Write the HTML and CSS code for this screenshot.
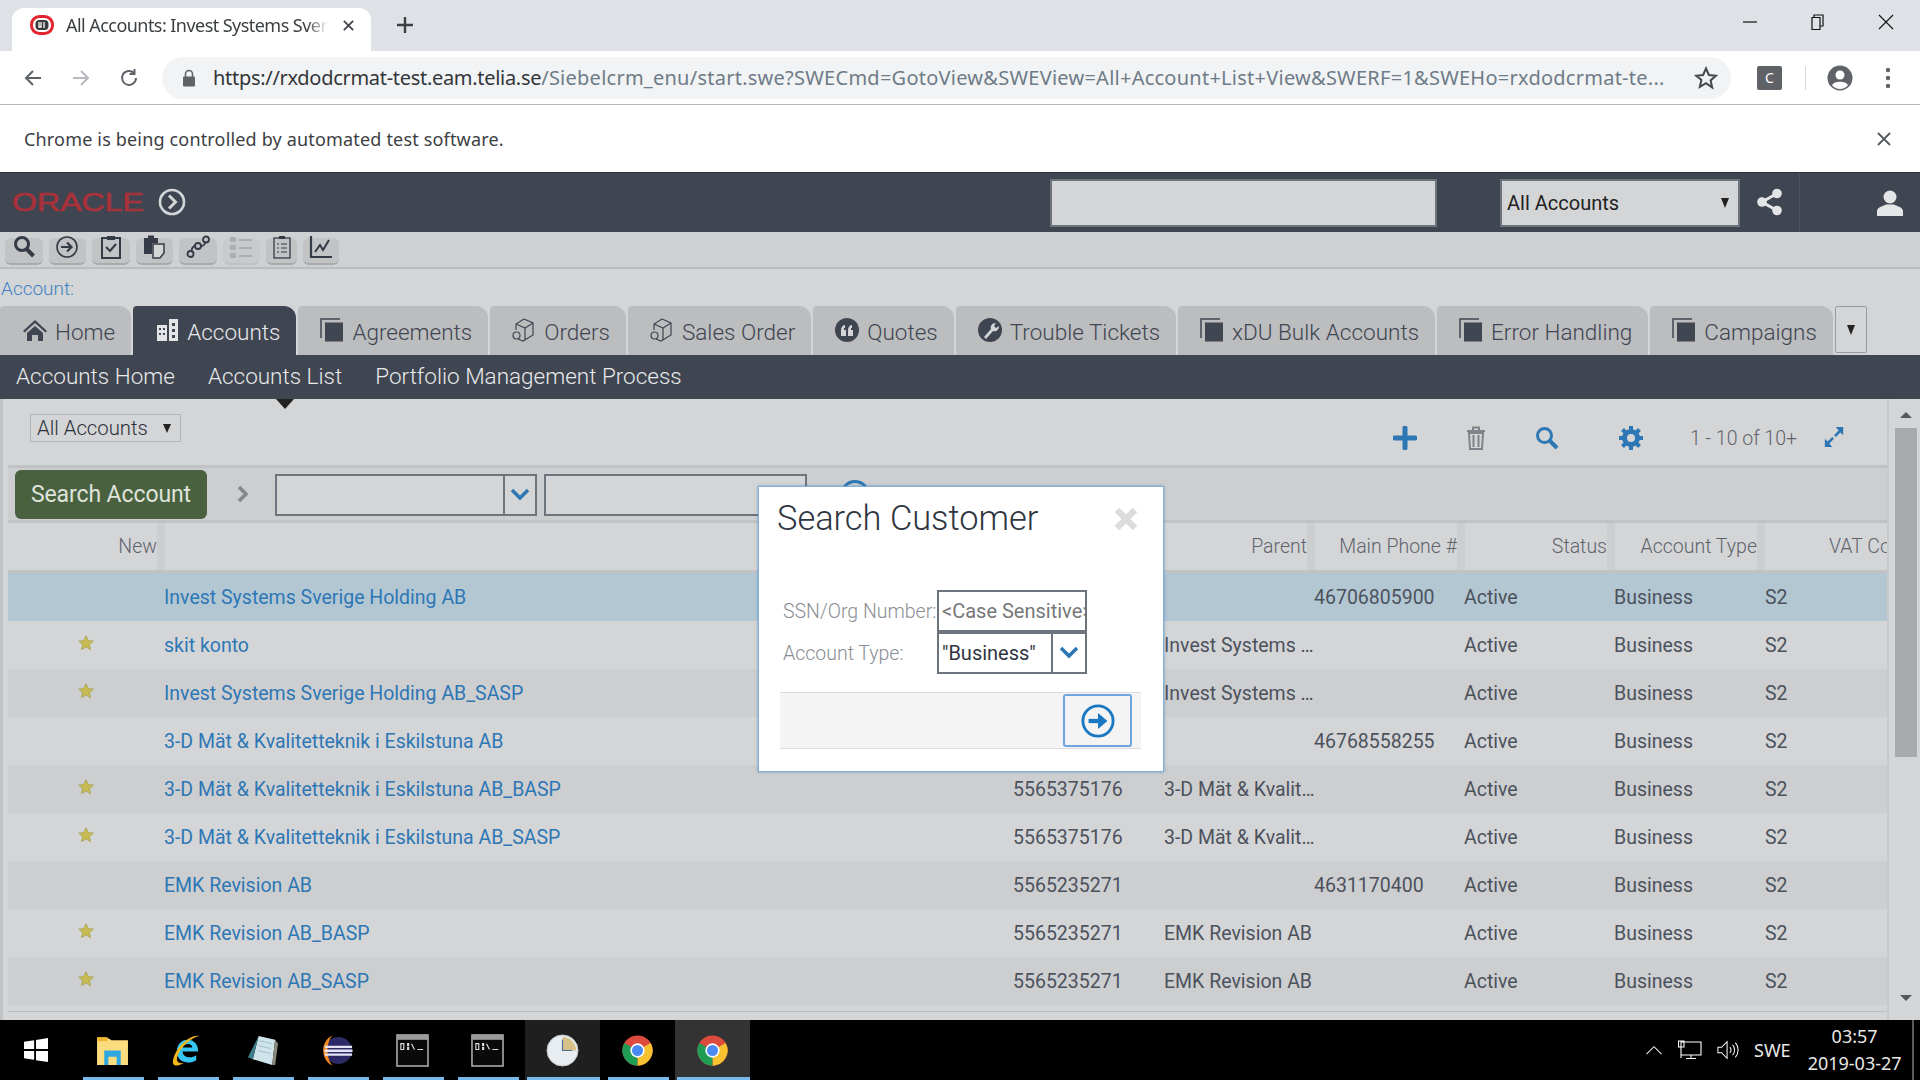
FILE: index.html
```html
<!DOCTYPE html>
<html lang="en">
<head>
<meta charset="utf-8">
<title>All Accounts: Invest Systems Sverige Holding AB</title>
<link rel="stylesheet" href="styles.css">
</head>
<body>
<svg class="defs" width="0" height="0">
  <symbol id="doc" viewBox="0 0 24 24"><path d="M1 20V1h19" fill="none" stroke="#3f4551" stroke-width="1.5"/><rect x="5" y="4.5" width="18" height="19" fill="#3f4551"/></symbol>
  <symbol id="box" viewBox="0 0 24 24"><path d="M12 1l9 4v12l-10 6-5-2M12 1L4 6v6M4 6l9 4 8-5M13 10v12" fill="none" stroke="#3f4551" stroke-width="1.2"/><circle cx="4.500" cy="17.500" r="3.500" fill="none" stroke="#3f4551" stroke-width="1.200"/></symbol>
  <symbol id="star" viewBox="0 0 24 24"><path d="M12 1l3.300 7.300 7.700.8-5.800 5.200 1.700 7.700L12 18l-6.900 4 1.700-7.700L1 9.100l7.700-.8z" fill="#c8bb56" stroke="#a59a4a" stroke-width="1"/></symbol>
  <symbol id="chev" viewBox="0 0 20 14"><path d="M2 2l8 8 8-8" fill="none" stroke="#2e77b5" stroke-width="3.500"/></symbol>
  <symbol id="circarrow" viewBox="0 0 36 36"><circle cx="18" cy="18" r="16" fill="none" stroke="currentColor" stroke-width="3"/><path d="M8 18h16" fill="none" stroke="currentColor" stroke-width="4.500"/><path d="M18 9.500l10 8.500-10 8.500z" fill="currentColor"/></symbol>
  <symbol id="chrome" viewBox="0 0 24 24"><circle cx="12" cy="12" r="11" fill="#dd4b3e"/><path d="M12 12L21.530 6.500A11 11 0 0 1 12 23Z" fill="#f6c230"/><path d="M12 12L12 23A11 11 0 0 1 2.470 6.500Z" fill="#1f9d55"/><circle cx="12" cy="12" r="5.200" fill="#fff"/><circle cx="12" cy="12" r="4" fill="#4a8af4"/></symbol>
  <symbol id="cmd" viewBox="0 0 34 34"><rect x="1" y="1" width="32" height="32" fill="#0a0a0a" stroke="#b9b9b9" stroke-width="1.500"/><rect x="1" y="1" width="32" height="5" fill="#9a9a9a"/><path d="M5 10h3v6H5zM12 10h1v2h-1zM12 14h1v2h-1zM16 10l3 6M22 16h6" fill="none" stroke="#ddd" stroke-width="1.200"/></symbol>
</svg>

<div class="page">
  <header class="tabstrip">
    <div class="btab">
      <svg class="fav" viewBox="0 0 24 20"><rect x="1.500" y="1.500" width="21" height="17" rx="8" fill="#fff" stroke="#e3262e" stroke-width="3"/><rect x="5.500" y="5" width="13" height="10" rx="4" fill="#3a3a3a"/><path d="M9 7v5h2V7M14 7v6" stroke="#fff" stroke-width="1.300" fill="none"/></svg>
      <span class="btab-title">All Accounts: Invest Systems Sverige Holding AB</span>
      <svg class="btab-x" viewBox="0 0 14 14"><path d="M2 2l10 10M12 2L2 12" stroke="#45484c" stroke-width="2"/></svg>
    </div>
    <svg class="newtab" viewBox="0 0 20 20"><path d="M10 2v16M2 10h16" stroke="#3c4043" stroke-width="2.400"/></svg>
    <div class="winctl">
      <svg viewBox="0 0 16 16"><path d="M1 8h14" stroke="#111" stroke-width="1.200"/></svg>
      <svg viewBox="0 0 16 16"><path d="M4 3V1h9v11h-3M2 3.500h8v12H2z" fill="none" stroke="#111" stroke-width="1.200"/></svg>
      <svg viewBox="0 0 16 16"><path d="M1 1l14 14M15 1L1 15" stroke="#111" stroke-width="1.100"/></svg>
    </div>
  </header>

  <nav class="toolbar">
    <svg class="nav" viewBox="0 0 20 20"><path d="M18 10H3M10 3l-7 7 7 7" fill="none" stroke="#5f6368" stroke-width="2"/></svg>
    <svg class="nav" viewBox="0 0 20 20"><path d="M2 10h15M10 3l7 7-7 7" fill="none" stroke="#b7b9bc" stroke-width="2"/></svg>
    <svg class="nav" viewBox="0 0 20 20"><path d="M17 10a7 7 0 1 1-2-5M15.500 1v5h-5" fill="none" stroke="#5f6368" stroke-width="2"/></svg>
    <div class="omnibox">
      <svg class="lock" viewBox="0 0 14 18"><path d="M3.500 8V5a3.500 3.500 0 0 1 7 0v3" fill="none" stroke="#5f6368" stroke-width="1.600"/><rect x="1" y="7.500" width="12" height="10" rx="1" fill="#5f6368"/></svg>
      <span class="url"><span class="url-host">https://rxdodcrmat-test.eam.telia.se</span>/Siebelcrm_enu/start.swe?SWECmd=GotoView&amp;SWEView=All+Account+List+View&amp;SWERF=1&amp;SWEHo=rxdodcrmat-te...</span>
      <svg class="bstar" viewBox="0 0 24 24"><path d="M12 2.500l2.900 6.500 7 .7-5.300 4.700 1.600 7L12 17.200l-6.200 3.700 1.600-7L2.100 9.700l7-.7z" fill="none" stroke="#45484c" stroke-width="2"/></svg>
    </div>
    <span class="ext">C</span>
    <span class="tdiv"></span>
    <svg class="person" viewBox="0 0 26 26"><circle cx="13" cy="13" r="12.500" fill="#5f6368"/><circle cx="13" cy="10" r="4.500" fill="#fff"/><path d="M5 20c2-4.500 14-4.500 16 0a10 10 0 0 1-16 0z" fill="#fff"/></svg>
    <svg class="dots" viewBox="0 0 6 24"><circle cx="3" cy="4" r="2.200" fill="#5f6368"/><circle cx="3" cy="12" r="2.200" fill="#5f6368"/><circle cx="3" cy="20" r="2.200" fill="#5f6368"/></svg>
  </nav>

  <div class="infobar">
    <span>Chrome is being controlled by automated test software.</span>
    <svg class="info-x" viewBox="0 0 14 14"><path d="M1 1l12 12M13 1L1 13" stroke="#55585c" stroke-width="1.800"/></svg>
  </div>

  <div class="apphead">
    <svg class="oracle" viewBox="0 0 134 24"><text x="0" y="21" textLength="132" lengthAdjust="spacingAndGlyphs">ORACLE</text></svg>
    <svg class="hcirc" viewBox="0 0 28 28"><circle cx="14" cy="14" r="12" fill="none" stroke="#d4d5d7" stroke-width="2.600"/><path d="M11 7.500l6.500 6.500-6.500 6.500" fill="none" stroke="#d4d5d7" stroke-width="3"/></svg>
    <div class="hsearch"></div>
    <div class="hselect"><span>All Accounts</span><i class="tri"></i></div>
    <svg class="share" viewBox="0 0 28 28"><circle cx="21" cy="5.500" r="4.800" fill="#e4e5e7"/><circle cx="6" cy="14" r="4.800" fill="#e4e5e7"/><circle cx="21" cy="22.500" r="4.800" fill="#e4e5e7"/><path d="M21 5.500L6 14l15 8.500" fill="none" stroke="#e4e5e7" stroke-width="3"/></svg>
    <div class="huser">
      <svg viewBox="0 0 28 28"><circle cx="14" cy="8" r="6.500" fill="#e4e5e7"/><path d="M1 27v-5c0-4 7-5 9-6.500h8c2 1.500 9 2.500 9 6.500v5z" fill="#e4e5e7"/></svg>
    </div>
  </div>

  <div class="iconbar">
    <span class="ib ib-w37"><svg viewBox="0 0 24 24"><circle cx="10" cy="9" r="6.500" fill="none" stroke="#343a46" stroke-width="3"/><path d="M14.500 14l7 7" stroke="#343a46" stroke-width="4"/></svg></span>
    <span class="ib ib-w37"><svg viewBox="0 0 24 24"><circle cx="12" cy="12" r="10" fill="none" stroke="#343a46" stroke-width="1.600"/><path d="M6 12h10M12 7.500l4.500 4.500-4.500 4.500" fill="none" stroke="#343a46" stroke-width="2.200"/></svg></span>
    <span class="ib ib-w37"><svg viewBox="0 0 24 24"><path d="M8 3H3v20h18V3h-5" fill="none" stroke="#343a46" stroke-width="2"/><rect x="8" y="1" width="8" height="4" fill="#343a46"/><path d="M7 12l4 4 6-7" fill="none" stroke="#343a46" stroke-width="2"/></svg></span>
    <span class="ib ib-w37"><svg viewBox="0 0 24 24"><path d="M2 3h14v5H10v11H2z" fill="#343a46"/><rect x="6" y="0.500" width="6" height="4" fill="#343a46"/><path d="M11 9h11v9l-4 5h-7z" fill="#d4d5d7" stroke="#343a46" stroke-width="1.500"/></svg></span>
    <span class="ib ib-w37"><svg viewBox="0 0 24 24"><g fill="none" stroke="#343a46" stroke-width="1.800"><circle cx="4.500" cy="19" r="3"/><circle cx="12" cy="11" r="3"/><circle cx="20" cy="4.500" r="3"/><path d="M5.500 16c0-3 2-5 3.500-5M15 11c2.500 0 4-2 4-3.500"/></g></svg></span>
    <span class="ib ib-w37 ib-off"><svg viewBox="0 0 24 24"><path d="M1 2h6v5H1zM1 10h6v5H1zM1 18h6v5H1zM10 4h13v2H10zM10 12h13v2H10zM10 20h13v2H10z" fill="#adaeb1"/></svg></span>
    <span class="ib ib-w31"><svg viewBox="0 0 24 24"><rect x="4" y="3" width="16" height="20" fill="none" stroke="#343a46" stroke-width="1.300"/><rect x="9" y="1" width="6" height="3" fill="#343a46"/><path d="M7 9h2M11 9h6M7 13h2M11 13h6M7 17h2M11 17h6" stroke="#343a46" stroke-width="1.100"/></svg></span>
    <span class="ib ib-w36"><svg viewBox="0 0 24 24"><path d="M2 1v21h21" fill="none" stroke="#343a46" stroke-width="2.200"/><path d="M6 17l5-7 3 5 6-10" fill="none" stroke="#343a46" stroke-width="2"/></svg></span>
  </div>

  <div class="acctrow">Account:</div>

  <div class="tabs">
    <a class="tab tab-first"><svg viewBox="0 0 24 24"><path d="M12 2L0 13l1.500 1.500L12 5l10.500 9.500L24 13zM4 15l8-7 8 7v8h-5v-6H9v6H4z" fill="#3f4551"/></svg>Home</a>
    <a class="tab tab-on"><svg viewBox="0 0 24 24"><path d="M2 7h10v16H2zM14 1h9v22h-9z" fill="#e4e5e7"/><path d="M4 10h2v2H4zM8 10h2v2H8zM4 15h2v2H4zM8 15h2v2H8zM17 5h3v3h-3zM17 11h3v3h-3zM17 17h3v3h-3z" fill="#3f4551"/></svg>Accounts</a>
    <a class="tab"><svg><use href="#doc"/></svg>Agreements</a>
    <a class="tab"><svg><use href="#box"/></svg>Orders</a>
    <a class="tab"><svg><use href="#box"/></svg>Sales Order</a>
    <a class="tab"><svg viewBox="0 0 24 24"><circle cx="12" cy="12" r="12" fill="#3f4551"/><path d="M6 18v-6c0-3 2-5 4-5v3H9v2h2v6zM13 18v-6c0-3 2-5 4-5v3h-1v2h2v6z" fill="#d4d5d7"/></svg>Quotes</a>
    <a class="tab"><svg viewBox="0 0 24 24"><circle cx="12" cy="12" r="12" fill="#3f4551"/><path d="M6 19l7-8c-1-3 1-6 5-6l-2 3 2 2 3-2c0 4-3 6-6 5l-7 8z" fill="#d4d5d7"/></svg>Trouble Tickets</a>
    <a class="tab"><svg><use href="#doc"/></svg>xDU Bulk Accounts</a>
    <a class="tab"><svg><use href="#doc"/></svg>Error Handling</a>
    <a class="tab"><svg><use href="#doc"/></svg>Campaigns</a>
    <span class="tabmore"><i class="tri"></i></span>
  </div>

  <div class="subnav">
    <a>Accounts Home</a>
    <a>Accounts List</a>
    <a>Portfolio Management Process</a>
    <i class="caret"></i>
  </div>

  <main class="content">
    <div class="list">
      <div class="listbar">
        <div class="viewsel"><span>All Accounts</span><i class="tri"></i></div>
        <div class="listtools">
          <svg class="lt lt-plus" viewBox="0 0 24 24"><path d="M12 2v20M2 12h20" stroke="#2e77b5" stroke-width="5" stroke-linecap="round"/></svg>
          <svg class="lt lt-trash" viewBox="0 0 20 24"><path d="M1 5h18M7 4V1.500h6V4" fill="none" stroke="#80848a" stroke-width="2"/><path d="M3 7h14l-1 16H4zM7.500 9v12M12.500 9v12" fill="none" stroke="#80848a" stroke-width="2"/></svg>
          <svg class="lt lt-search" viewBox="0 0 24 24"><circle cx="9.500" cy="9.500" r="7" fill="none" stroke="#2e77b5" stroke-width="3"/><path d="M14.500 14.500l7.500 7.500" stroke="#2e77b5" stroke-width="4"/></svg>
          <svg class="lt lt-gear" viewBox="0 0 24 24"><circle cx="12" cy="12" r="6.500" fill="none" stroke="#2e77b5" stroke-width="5"/><path d="M12 0v5M12 19v5M0 12h5M19 12h5M3.500 3.500l3.500 3.500M17 17l3.500 3.500M20.500 3.500L17 7M7 17l-3.500 3.500" stroke="#2e77b5" stroke-width="4"/></svg>
          <span class="count">1 - 10 of 10+</span>
          <svg class="lt lt-exp" viewBox="0 0 22 24"><path d="M13 1h8v9l-3-3-5 5-2-2 5-5zM9 23H1v-9l3 3 5-5 2 2-5 5z" fill="#2e77b5"/></svg>
        </div>
      </div>

      <div class="searchbar">
        <button class="greenbtn">Search Account</button>
        <svg class="sb-chev" viewBox="0 0 12 18"><path d="M2 2l7 7-7 7" fill="none" stroke="#85878b" stroke-width="3.500"/></svg>
        <div class="sb-select"><span></span><b><svg><use href="#chev"/></svg></b></div>
        <div class="sb-input"></div>
        <i class="sb-go"></i>
      </div>

      <div class="grid ghead">
        <span class="hc">New</span>
        <span class="hc"></span>
        <span class="hc hc-none"></span>
        <span class="hc">Parent</span>
        <span class="hc">Main Phone #</span>
        <span class="hc">Status</span>
        <span class="hc">Account Type</span>
        <span class="hc hc-clip">VAT Code</span>
      </div>

      <div class="grid row row-sel"><span></span><a>Invest Systems Sverige Holding AB</a><span></span><span></span><span>46706805900</span><span>Active</span><span>Business</span><span>S2</span></div>
      <div class="grid row"><span class="st"><svg><use href="#star"/></svg></span><a>skit konto</a><span></span><span>Invest Systems …</span><span></span><span>Active</span><span>Business</span><span>S2</span></div>
      <div class="grid row row-alt"><span class="st"><svg><use href="#star"/></svg></span><a>Invest Systems Sverige Holding AB_SASP</a><span></span><span>Invest Systems …</span><span></span><span>Active</span><span>Business</span><span>S2</span></div>
      <div class="grid row"><span></span><a>3-D Mät &amp; Kvalitetteknik i Eskilstuna AB</a><span></span><span></span><span>46768558255</span><span>Active</span><span>Business</span><span>S2</span></div>
      <div class="grid row row-alt"><span class="st"><svg><use href="#star"/></svg></span><a>3-D Mät &amp; Kvalitetteknik i Eskilstuna AB_BASP</a><span>5565375176</span><span>3-D Mät &amp; Kvalit…</span><span></span><span>Active</span><span>Business</span><span>S2</span></div>
      <div class="grid row"><span class="st"><svg><use href="#star"/></svg></span><a>3-D Mät &amp; Kvalitetteknik i Eskilstuna AB_SASP</a><span>5565375176</span><span>3-D Mät &amp; Kvalit…</span><span></span><span>Active</span><span>Business</span><span>S2</span></div>
      <div class="grid row row-alt"><span></span><a>EMK Revision AB</a><span>5565235271</span><span></span><span>4631170400</span><span>Active</span><span>Business</span><span>S2</span></div>
      <div class="grid row"><span class="st"><svg><use href="#star"/></svg></span><a>EMK Revision AB_BASP</a><span>5565235271</span><span>EMK Revision AB</span><span></span><span>Active</span><span>Business</span><span>S2</span></div>
      <div class="grid row row-alt"><span class="st"><svg><use href="#star"/></svg></span><a>EMK Revision AB_SASP</a><span>5565235271</span><span>EMK Revision AB</span><span></span><span>Active</span><span>Business</span><span>S2</span></div>
      <div class="listfoot"></div>
    </div>
    <aside class="scroll">
      <i class="sc-up"></i>
      <div class="sc-thumb"></div>
      <i class="sc-down"></i>
    </aside>
  </main>

  <footer class="taskbar">
    <span class="tb tb-start"><svg viewBox="0 0 26 26"><path d="M0 4l11-1.500V12H0zM13 2.200L26 0v12H13zM0 14h11v9.500L0 22zM13 14h13v12l-13-2z" fill="#fff"/></svg></span>
    <span class="tb"><svg viewBox="0 0 32 32"><path d="M1 4h11l3 2h16v24H1z" fill="#fbdc7e"/><path d="M1 3h10v4H1z" fill="#f0b731"/><path d="M8 16h16v14h-4v-8h-8v8H8z" fill="#2fa7e0"/></svg></span>
    <span class="tb"><svg viewBox="0 0 34 34"><path d="M17 6c7 0 11 5 11 12H12c0 6 8 8 14 4v5c-8 5-20 2-20-9C6 11 11 6 17 6zM12 14h10c0-5-9-5-10 0z" fill="#37c6f4"/><path d="M29 2C20 0 4 14 2 28c-1 5 5 6 11 2C6 31 5 27 7 22 10 13 22 3 29 2z" fill="#f3b918"/></svg></span>
    <span class="tb"><svg viewBox="0 0 34 34"><path d="M13 2l17 4-3 26-20-6z" fill="#cfe3ea"/><path d="M13 2L2 24l5 2z" fill="#3d7f8c"/><path d="M30 6l3 4-3 22-3 0z" fill="#8b8b7d"/><path d="M14 7l13 3M13 12l13 3M12 17l13 3" stroke="#9fc1cc" stroke-width="1"/></svg></span>
    <span class="tb"><svg viewBox="0 0 34 34"><circle cx="18" cy="17" r="14" fill="#2e2a68"/><path d="M12 1.500C-1 7-1 27 12 32.500 5 26 5 8 12 1.500z" fill="#f58a1f"/><path d="M4 12h28v2.500H4zM3.500 16h29v2.500h-29zM4 20h28v2.500H4z" fill="#e6e3f2"/></svg></span>
    <span class="tb"><svg><use href="#cmd"/></svg></span>
    <span class="tb"><svg><use href="#cmd"/></svg></span>
    <span class="tb tb-open"><svg viewBox="0 0 34 34"><circle cx="17" cy="17" r="16" fill="#e7edf1" stroke="#bfbfbf"/><path d="M17 3a14 14 0 0 1 14 14H17z" fill="#d8c187"/><path d="M17 6v11h10" fill="none" stroke="#4a6e95" stroke-width="1.200"/></svg></span>
    <span class="tb"><svg><use href="#chrome"/></svg></span>
    <span class="tb tb-active"><svg><use href="#chrome"/></svg></span>
    <div class="tray">
      <svg class="tr-up" viewBox="0 0 20 12"><path d="M1 11l9-9 9 9" fill="none" stroke="#e6e6e6" stroke-width="1.300"/></svg>
      <svg class="tr-net" viewBox="0 0 24 20"><path d="M3 2h20v13H3zM3 15v3M13 15v3M8 18.500h10M0.500 1h5.500v6H0.500z" fill="#000" stroke="#fff" stroke-width="1.100"/></svg>
      <svg class="tr-vol" viewBox="0 0 24 20"><path d="M1 7h4l6-6v18l-6-6H1z" fill="none" stroke="#fff" stroke-width="1.100"/><path d="M14 7a4 4 0 0 1 0 6M17 4.500a8 8 0 0 1 0 11M20 2a12 12 0 0 1 0 16" fill="none" stroke="#fff" stroke-width="1.100"/></svg>
      <span class="tr-lang">SWE</span>
      <div class="clock"><span>03:57</span><span>2019-03-27</span></div>
      <i class="tr-edge"></i>
    </div>
  </footer>

  <section class="dialog">
    <div class="dlg-head">
      <h1>Search Customer</h1>
      <svg class="dlg-x" viewBox="0 0 24 22"><path d="M3 2l18 18M21 2L3 20" stroke="#dcdcdc" stroke-width="6.500"/></svg>
    </div>
    <div class="dlg-form">
      <label>SSN/Org Number:</label>
      <div class="dlg-input">&lt;Case Sensitive&gt;</div>
      <label>Account Type:</label>
      <div class="dlg-select"><span>"Business"</span><b><svg><use href="#chev"/></svg></b></div>
    </div>
    <div class="dlg-foot">
      <span class="dlg-go"><svg><use href="#circarrow"/></svg></span>
    </div>
  </section>
</div>
</body>
</html>
```

FILE: styles.css
```css
* { box-sizing: border-box; }
html, body { margin: 0; padding: 0; }
body { width: 1920px; height: 1080px; overflow: hidden; background: #d4d5d7; font-family: Roboto, "Liberation Sans", sans-serif; }
.defs { position: absolute; }
.page { position: relative; width: 1920px; height: 1080px; display: flex; flex-direction: column; overflow: hidden; }
.tri { display: inline-block; width: 0; height: 0; border-left: 4.5px solid transparent; border-right: 4.5px solid transparent; border-top: 10px solid #222; }

/* browser chrome */
.tabstrip { height: 51px; background: #dee1e6; display: flex; align-items: flex-end; padding-left: 12px; flex: none; }
.btab { width: 359px; height: 43px; background: #fff; border-radius: 12px 12px 0 0; display: flex; align-items: center; padding-left: 18px; }
.fav { width: 24px; height: 20px; flex: none; margin-right: 12px; margin-top: -9px; }
.btab-title { width: 262px; overflow: hidden; white-space: nowrap; font: 18px "Noto Sans", sans-serif; color: #3c4043; margin-top: -9px; letter-spacing: -0.55px; -webkit-mask-image: linear-gradient(to right, #000 92%, transparent); mask-image: linear-gradient(to right, #000 92%, transparent); }
.btab-x { width: 13px; height: 13px; margin-left: 14px; margin-top: -9px; }
.newtab { width: 20px; height: 20px; margin: 0 0 16px 24px; }
.winctl { margin-left: auto; align-self: stretch; display: flex; align-items: center; gap: 52px; padding-right: 26px; }
.winctl svg { width: 16px; height: 16px; margin-bottom: 8px; }

.toolbar { height: 54px; background: #fff; border-bottom: 1px solid #b9babb; display: flex; align-items: center; padding-left: 23px; flex: none; }
.nav { width: 20px; height: 20px; margin-right: 28px; flex: none; }
.omnibox { width: 1569px; margin-left: -5px; height: 42px; border-radius: 21px; background: #f1f3f4; display: flex; align-items: center; padding-left: 20px; flex: none; }
.lock { width: 14px; height: 18px; flex: none; margin-right: 17px; }
.url { width: 1452px; white-space: nowrap; overflow: hidden; font: 20px "Noto Sans", sans-serif; letter-spacing: 0.25px; color: #6e7b88; }
.url-host { color: #33363a; letter-spacing: -0.3px; }
.bstar { width: 24px; height: 24px; margin-left: 29px; flex: none; }
.ext { width: 25px; height: 24px; margin-left: 26px; background: #5f6368; color: #fff; border-radius: 2px; font: 14px/24px "Noto Sans", sans-serif; text-align: center; flex: none; }
.tdiv { width: 1px; height: 24px; background: #d8d8d8; margin-left: 23px; flex: none; }
.person { width: 26px; height: 26px; margin-left: 21px; flex: none; }
.dots { width: 6px; height: 24px; margin-left: 32px; flex: none; }

.infobar { height: 67px; background: #fff; display: flex; align-items: center; padding: 0 29px 0 24px; justify-content: space-between; font: 18px "Noto Sans", sans-serif; letter-spacing: 0.17px; color: #3c4043; flex: none; }
.info-x { width: 14px; height: 14px; }

/* application header */
.apphead { height: 60px; background: #3f4551; border-top: 1px solid #2c313b; display: flex; align-items: center; padding-left: 12px; flex: none; }
.oracle { width: 134px; height: 24px; flex: none; margin-top: -2px; overflow: visible; }
.oracle text { font: 400 25px "Liberation Sans", sans-serif; fill: #a8323b; stroke: #a8323b; stroke-width: 0.7px; }
.hcirc { width: 28px; height: 28px; margin-left: 12px; flex: none; margin-top: -1px; }
.hsearch { width: 387px; height: 48px; margin-left: 864px; background: #d4d5d7; border: 2px solid #6d747e; flex: none; }
.hselect { width: 240px; height: 48px; margin-left: 63px; background: #d4d5d7; border: 2px solid #6d747e; display: flex; align-items: center; justify-content: space-between; padding: 0 9px 0 5px; font-size: 20px; color: #222; flex: none; }
.share { width: 28px; height: 28px; margin-left: 16px; flex: none; margin-top: -2px; }
.huser { margin-left: 15px; border-left: 1px solid #4d535e; height: 59px; display: flex; align-items: center; padding-left: 76px; flex: none; }
.huser svg { width: 28px; height: 28px; }

.iconbar { height: 37px; background: #cfd0d2; border-bottom: 2px solid #bcbdbf; display: flex; align-items: center; gap: 6px; padding: 0 0 1px 5px; flex: none; }
.ib { height: 27px; background: #c2c3c5; border-radius: 6px; border-bottom: 2px solid #a9aaac; display: flex; align-items: center; justify-content: center; flex: none; margin-top: 4px; }
.ib svg { width: 24px; height: 24px; margin-top: -6px; }
.ib-w37 { width: 37.5px; }
.ib-w31 { width: 31px; }
.ib-w36 { width: 36px; }
.ib-off { background: #c9cacc; border-bottom-color: #c0c1c3; }
.acctrow { height: 37px; background: #d4d5d7; color: #3f82c2; font-size: 19px; font-weight: 300; line-height: 39px; padding-left: 1px; flex: none; }

.tabs { height: 49px; background: #d4d5d7; display: flex; align-items: stretch; gap: 2px; flex: none; }
.tab { background: #bcbdbf; border-radius: 4px 12px 0 0; display: flex; align-items: center; gap: 8px; padding: 3px 16px 0 22px; font-size: 22.5px; font-weight: 300; color: #3f4551; white-space: nowrap; }
.tab svg { width: 24px; height: 24px; flex: none; margin-top: -4px; }
.tab-first { padding-left: 23px; }
.tab-on { background: #3f4551; color: #e8e9ea; }
.tabmore { width: 32px; height: 47px; border: 1px solid #9a9ba0; border-radius: 2px; margin-left: 0; display: flex; align-items: center; justify-content: center; background: #d4d5d7; }

.subnav { height: 44px; background: #3f4551; display: flex; align-items: center; gap: 33px; padding: 0 0 2px 16px; position: relative; font-size: 22.5px; font-weight: 300; color: #e8e9ea; flex: none; }
.caret { position: absolute; left: 276px; top: 44px; width: 0; height: 0; border-left: 9px solid transparent; border-right: 9px solid transparent; border-top: 10px solid #222; z-index: 2; }

/* list */
.content { flex: 1; display: flex; min-height: 0; padding-left: 8px; background: linear-gradient(to right, #c1c2c4 3px, #d4d5d7 3px); }
.list { width: 1879px; display: flex; flex-direction: column; }
.listbar { height: 69px; display: flex; align-items: flex-start; padding-left: 22px; border-bottom: 3px solid #c1c2c4; flex: none; }
.viewsel { width: 151px; height: 28px; margin-top: 15px; border: 1px solid #b3b4b6; display: flex; align-items: center; justify-content: space-between; padding: 0 9px 0 6px; font-size: 20.3px; font-weight: 300; color: #2b2f37; }
.viewsel .tri { border-top-width: 9px; }
.listtools { margin-left: auto; display: flex; align-items: center; height: 66px; padding-right: 42px; padding-top: 12px; }
.lt { flex: none; }
.lt-plus { width: 24px; height: 24px; margin-right: 49px; }
.lt-trash { width: 20px; height: 26px; margin-right: 49px; }
.lt-search { width: 24px; height: 24px; margin-right: 60px; }
.lt-gear { width: 24px; height: 24px; margin-right: 47px; }
.count { font-size: 19.5px; font-weight: 300; color: #5f646c; margin-right: 26px; white-space: nowrap; }
.lt-exp { width: 22px; height: 22px; margin-top: -2px; }

.searchbar { height: 52px; background: #cdced0; display: flex; align-items: center; padding: 1px 0 0 7px; flex: none; position: relative; }
.greenbtn { width: 192px; height: 49px; background: #4a6140; color: #dfe3dc; border: 0; border-radius: 6px; font: 400 23px Roboto, sans-serif; padding: 0; letter-spacing: -0.1px; }
.sb-chev { width: 12px; height: 18px; margin-left: 30px; flex: none; margin-top: -2px; }
.sb-select { width: 262px; height: 42px; margin-left: 26px; border: 2px solid #6d747e; background: #d4d5d7; display: flex; flex: none; }
.sb-select span { flex: 1; }
.sb-select b { width: 32px; border-left: 2px solid #6d747e; display: flex; align-items: center; justify-content: center; flex: none; }
.sb-select svg, .dlg-select svg { width: 20px; height: 14px; }
.sb-input { width: 263px; height: 42px; margin-left: 7px; border: 2px solid #6d747e; background: #d4d5d7; flex: none; }
.sb-go { width: 30px; height: 30px; border: 3px solid #2e77b5; border-radius: 50%; margin-left: 33px; flex: none; }

.grid { display: grid; grid-template-columns: 157px 848px 152px 150px 150px 150px 150px 122px; flex: none; }
.ghead { height: 53px; background: #d4d5d7; border-top: 3px solid #c1c2c4; border-bottom: 3px solid #c1c2c4; font-size: 19.5px; font-weight: 300; color: #5f646c; }
.hc { border-right: 8px solid #cdced0; text-align: right; line-height: 47px; white-space: nowrap; overflow: hidden; }
.hc-none { border-right: 0; }
.hc-clip { border-right: 0; text-align: left; padding-left: 64px; }

.row { height: 48px; align-items: center; font-size: 19.5px; color: #4c525c; background: #d4d5d7; white-space: nowrap; }
.row > * { margin-left: -1px; }
.row > :nth-child(3), .row > :nth-child(8) { margin-left: 0; }
.row a { color: #2e77b5; }
.row-sel { background: #b3c7d3; }
.row-alt { background: #cdced0; }
.st { padding-left: 71px; height: 16px; display: block; margin-top: -4px; }
.st svg { width: 16px; height: 16px; display: block; }
.listfoot { flex: 1; border-top: 0; background: linear-gradient(to bottom, #d4d5d7 6px, #bcbdbf 6px, #bcbdbf 7px, #d4d5d7 7px); }

.scroll { width: 33px; border-left: 2px solid #c8c9cb; position: relative; flex: none; }
.sc-thumb { position: absolute; left: 6px; top: 29px; width: 22px; height: 329px; background: #a9aaac; }
.sc-up, .sc-down { position: absolute; left: 11px; width: 0; height: 0; border-left: 6px solid transparent; border-right: 6px solid transparent; }
.sc-up { top: 13px; border-bottom: 6px solid #55585c; }
.sc-down { bottom: 19px; border-top: 6px solid #55585c; }

/* taskbar */
.taskbar { height: 60px; background: #000; display: flex; flex: none; }
.tb { width: 75px; height: 60px; display: flex; align-items: center; justify-content: center; position: relative; flex: none; }
.tb svg { width: 33px; height: 33px; }
.tb-start { padding-right: 3px; }
.tb-start svg { width: 24px; height: 24px; }
.tb:not(.tb-start)::after { content: ""; position: absolute; left: 8px; right: 6px; bottom: 0; height: 3px; background: #76b9ed; }
.tb-open { background: #1f1f1f; }
.tb-open::after { left: 2px !important; right: 0 !important; }
.tb-active { background: #333; }
.tb-active::after { left: 2px !important; right: 0 !important; }
.tray { flex: 1; display: flex; align-items: center; padding-left: 895px; color: #e8e8e8; font: 18px "Noto Sans", sans-serif; position: relative; }
.tr-up { width: 18px; height: 10px; flex: none; }
.tr-net { width: 24px; height: 20px; margin-left: 15px; flex: none; }
.tr-vol { width: 22px; height: 20px; margin-left: 15px; flex: none; }
.tr-lang { margin-left: 15px; }
.clock { display: flex; flex-direction: column; align-items: center; gap: 2px; margin-left: 17px; line-height: 25px; }
.tr-edge { position: absolute; right: 6px; top: 0; bottom: 0; width: 2px; background: #5a5a5a; }

/* dialog */
.dialog { position: absolute; left: 758px; top: 486px; width: 406px; height: 286px; background: #fff; border: 1px solid #7fb0d8; box-shadow: 0 0 3px rgba(60, 120, 180, .6); padding: 0 22px 0 21px; z-index: 5; }
.dlg-head { height: 63px; display: flex; align-items: center; justify-content: space-between; margin-left: -3px; }
.dlg-head h1 { margin: 0; font-size: 34.4px; font-weight: 300; color: #2f3540; line-height: 63px; }
.dlg-x { width: 24px; height: 22px; margin-right: 3px; }
.dlg-form { display: grid; grid-template-columns: 157px 150px; grid-auto-rows: 42px; margin-top: 40px; font-size: 19.5px; align-items: center; }
.dlg-form label { color: #8a8e94; font-weight: 300; padding-left: 3px; white-space: nowrap; }
.dlg-input, .dlg-select { height: 42px; border: 2px solid #6d747e; }
.dlg-input { padding-left: 3px; line-height: 38px; color: #777; overflow: hidden; white-space: nowrap; font-size: 20px; }
.dlg-select { display: flex; color: #2f3540; line-height: 38px; font-size: 20px; }
.dlg-select span { flex: 1; padding-left: 3px; }
.dlg-select b { width: 34px; border-left: 2px solid #6d747e; display: flex; align-items: center; justify-content: center; flex: none; }
.dlg-foot { height: 57px; margin-top: 18px; background: #f4f4f4; border-top: 1px solid #ddd; border-bottom: 1px solid #ddd; display: flex; justify-content: flex-end; align-items: center; padding-right: 9px; }
.dlg-go { width: 69px; height: 53px; border: 2px solid #6ea5e0; border-radius: 3px; display: flex; align-items: center; justify-content: center; color: #1a78c2; }
.dlg-go svg { width: 34px; height: 34px; }
```
